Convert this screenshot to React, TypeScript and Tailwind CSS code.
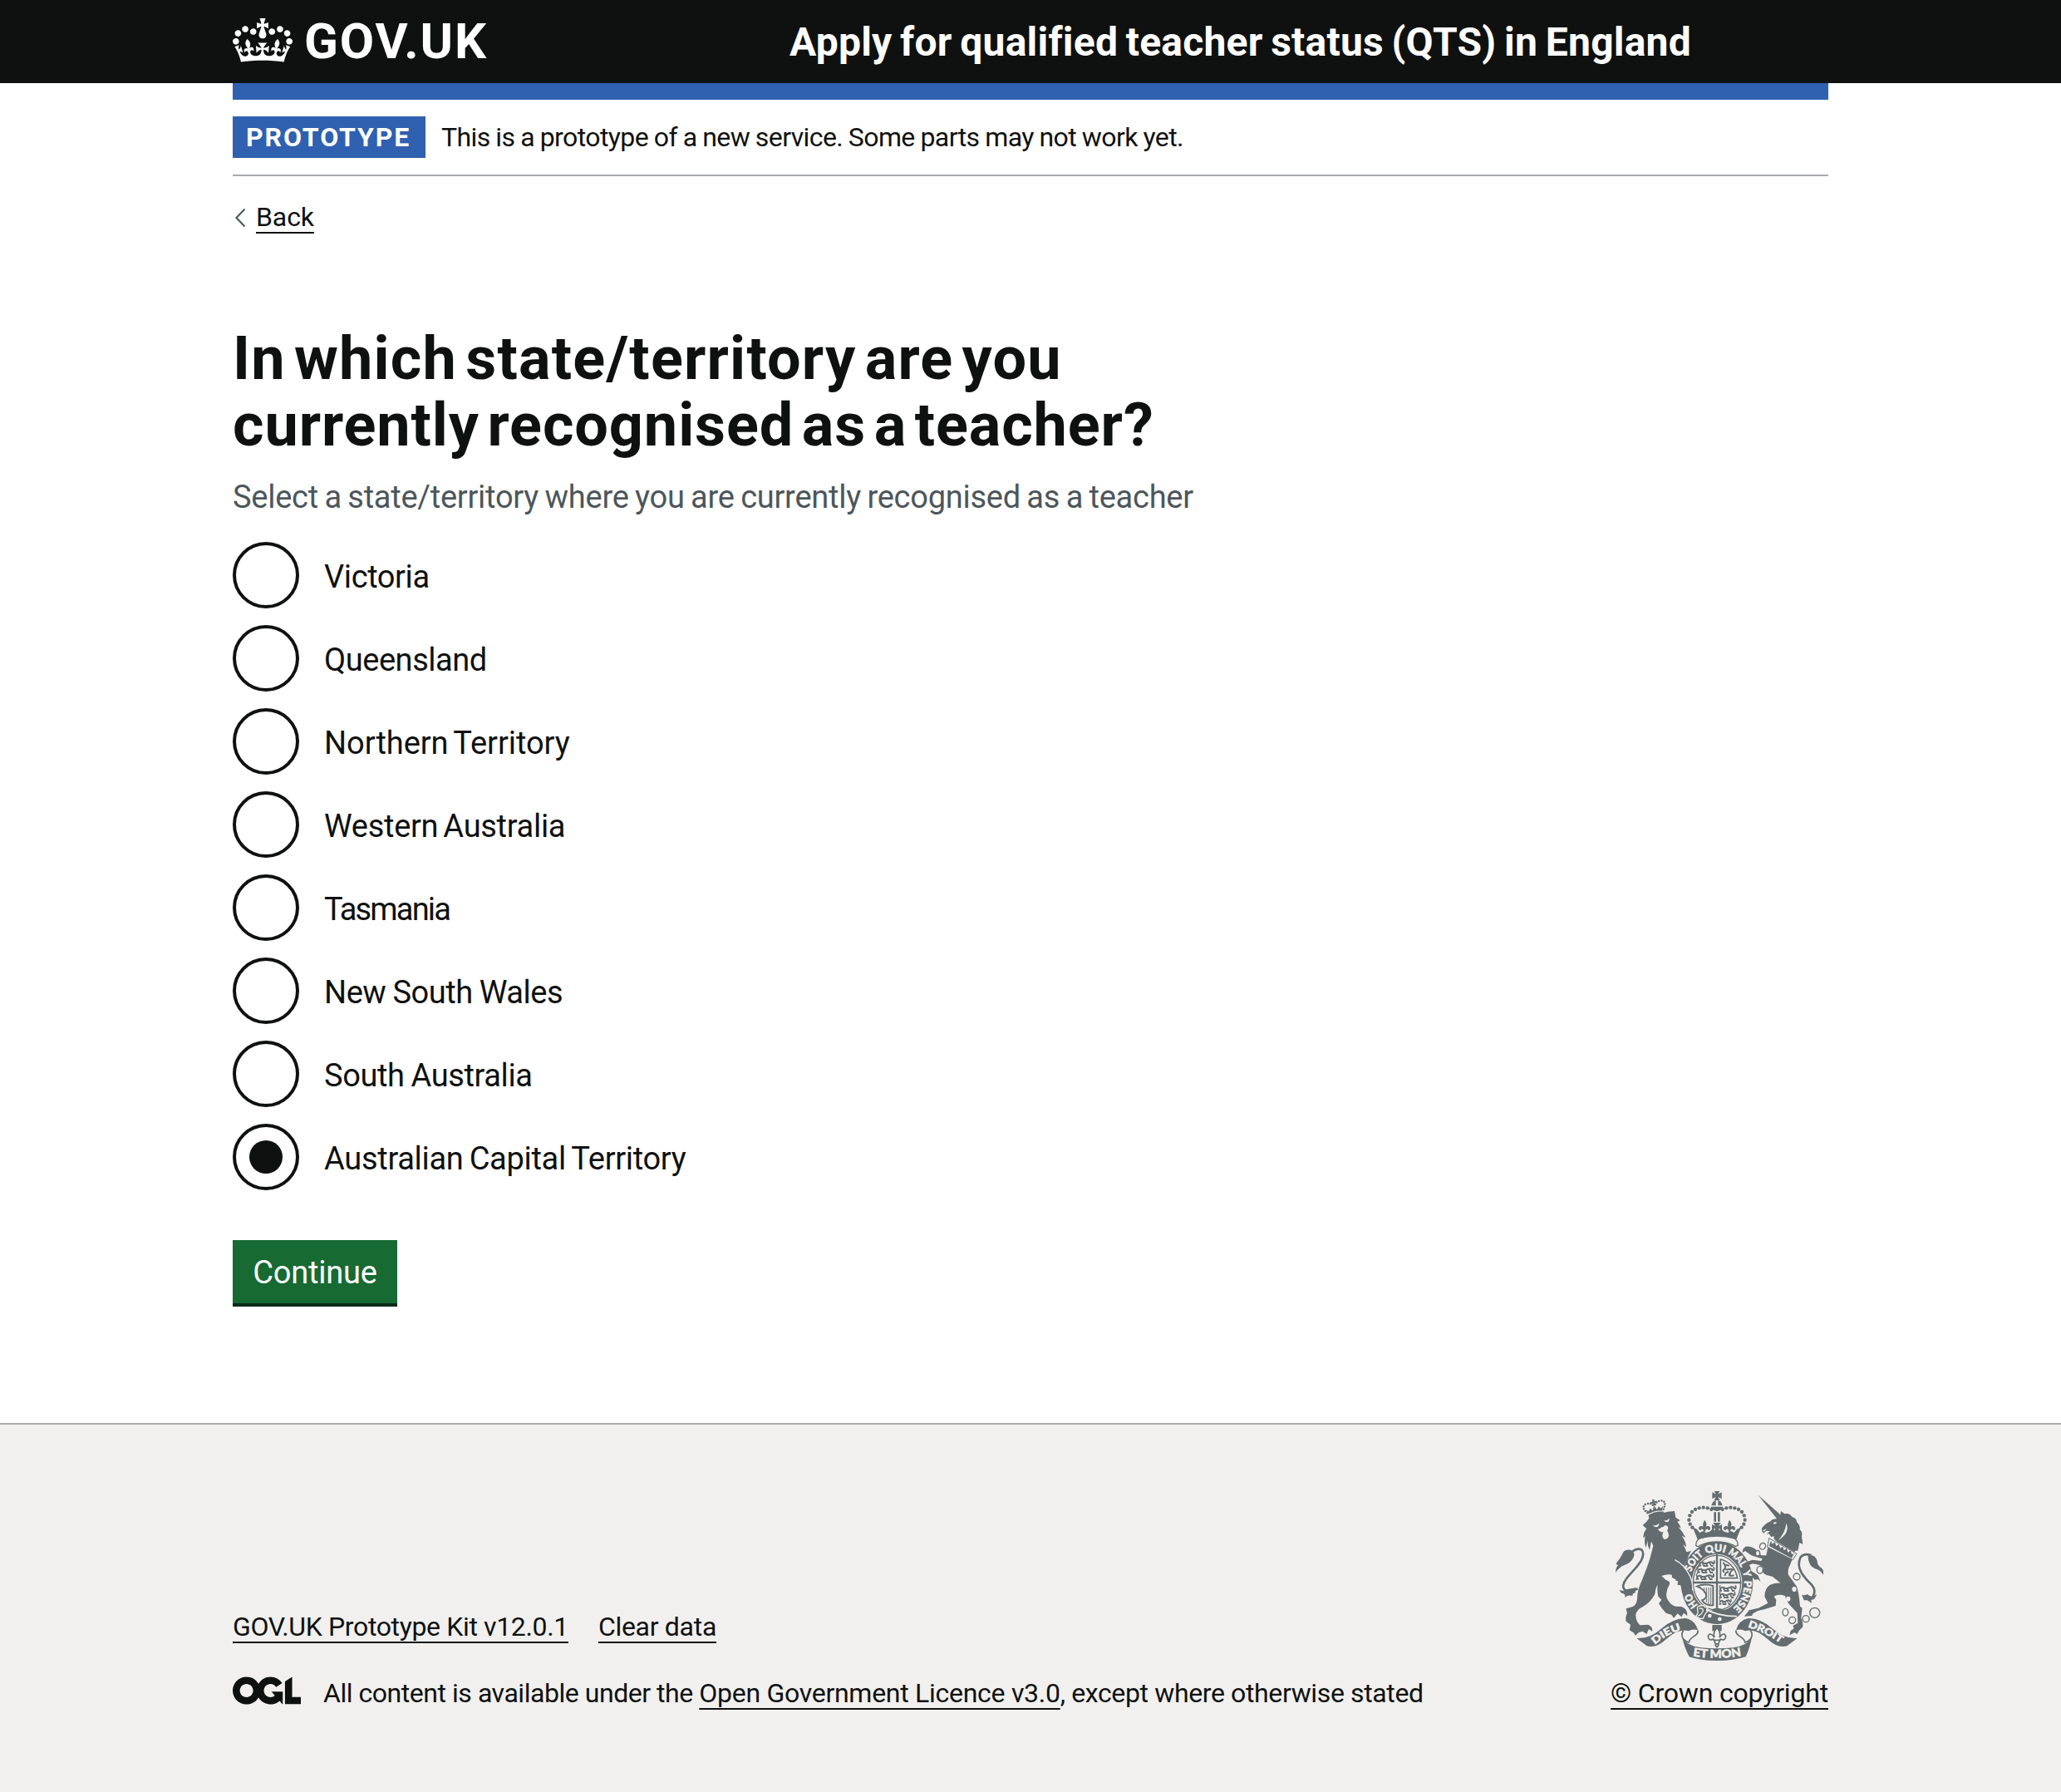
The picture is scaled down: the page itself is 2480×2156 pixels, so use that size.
import type { ReactNode } from "react";

const STATES = [
  { name: "Victoria", tracking: "tracking-[-0.4px]" },
  { name: "Queensland", tracking: "tracking-[-0.45px]" },
  { name: "Northern Territory", tracking: "tracking-[-0.05px] [word-spacing:-3px]" },
  { name: "Western Australia", tracking: "tracking-[-0.3px] [word-spacing:-3px]" },
  { name: "Tasmania", tracking: "tracking-[-1.84px]" },
  { name: "New South Wales", tracking: "tracking-[-0.45px] [word-spacing:-1px]" },
  { name: "South Australia", tracking: "tracking-[-0.4px] [word-spacing:-1px]" },
  { name: "Australian Capital Territory", tracking: "tracking-[-0.3px] [word-spacing:-2px]", selected: true },
];

function Link({ children, className = "" }: { children: ReactNode; className?: string }) {
  return (
    <a
      href="#"
      className={`whitespace-pre underline decoration-2 underline-offset-[7px] [text-decoration-skip-ink:none] ${className}`}
    >
      {children}
    </a>
  );
}

function CrownLogo() {
  return (
    <svg viewBox="0 0 132 97" className="h-[53px] w-[72px] fill-current" aria-hidden="true">
      <path d="M25 30.2c3.5 1.5 7.7-.2 9.1-3.7 1.5-3.6-.2-7.8-3.9-9.2-3.6-1.4-7.6.3-9.1 3.9-1.4 3.5.3 7.5 3.9 9zM9 39.5c3.6 1.5 7.8-.2 9.2-3.7 1.5-3.6-.2-7.8-3.9-9.1-3.6-1.5-7.6.2-9.1 3.8-1.4 3.5.3 7.5 3.8 9zM4.4 57.2c3.5 1.5 7.7-.2 9.1-3.8 1.5-3.6-.2-7.7-3.9-9.1-3.5-1.5-7.6.3-9.1 3.8-1.4 3.5.3 7.6 3.9 9.1zm38.3-21.4c3.5 1.5 7.7-.2 9.1-3.8 1.5-3.6-.2-7.7-3.9-9.1-3.6-1.5-7.6.3-9.1 3.8-1.3 3.6.4 7.7 3.9 9.1zm64.4-5.6c-3.6 1.5-7.8-.2-9.1-3.7-1.5-3.6.2-7.8 3.8-9.2 3.6-1.4 7.7.3 9.2 3.9 1.3 3.5-.4 7.5-3.9 9zm15.9 9.3c-3.6 1.5-7.7-.2-9.1-3.7-1.5-3.6.2-7.8 3.7-9.1 3.6-1.5 7.7.2 9.2 3.8 1.5 3.5-.3 7.5-3.8 9zm4.7 17.7c-3.6 1.5-7.8-.2-9.2-3.8-1.5-3.6.2-7.7 3.9-9.1 3.6-1.5 7.7.3 9.2 3.8 1.3 3.5-.4 7.6-3.9 9.1zM89.3 35.8c-3.6 1.5-7.8-.2-9.2-3.8-1.4-3.6.2-7.7 3.9-9.1 3.6-1.5 7.7.3 9.2 3.8 1.4 3.6-.3 7.7-3.9 9.1zM69.7 17.7l8.9 4.7V9.3l-8.9 2.8c-.2-.3-.5-.6-.9-.9L72.4 0H59.6l3.5 11.2c-.3.3-.6.5-.9.9l-8.8-2.8v13.1l8.8-4.7c.3.3.6.7.9.9l-5 15.4v.1c-.2.8-.4 1.6-.4 2.4 0 4.1 3.1 7.5 7 8.1h.2c.3 0 .7.1 1 .1.4 0 .7 0 1-.1h.2c4-.6 7.1-4.1 7.1-8.1 0-.8-.1-1.7-.4-2.4V34l-5.1-15.4c.4-.2.7-.6 1-.9zM66 92.8c16.9 0 32.8 1.1 47.1 3.2 4-16.9 8.9-26.7 14-33.5l-9.6-3.4c1 4.9 1.1 7.2 0 10.2-1.5-1.4-3-4.3-4.2-8.7L108.6 76c2.8-2 5-3.2 7.5-3.3-4.4 9.4-10 11.9-13.6 11.2-4.3-.8-6.3-4.6-5.6-7.9 1-4.7 5.7-5.9 8-.5 4.3-8.7-3-11.4-7.6-8.8 7.1-7.2 7.9-13.5 2.1-21.1-8 6.1-8.1 12.3-4.5 20.8-4.7-5.4-12.1-2.5-9.5 6.2 3.4-5.2 7.9-2 7.2 3.1-.6 4.3-6.4 7.8-13.5 7.2-10.3-.9-10.9-8-11.2-13.8 2.5-.5 7.1 1.8 11 7.3L80.2 60c-4.1 4.4-8 5.3-12.3 5.4 1.4-4.4 8-11.6 8-11.6H55.5s6.4 7.2 7.9 11.6c-4.2-.1-8-1-12.3-5.4l1.4 16.4c3.9-5.5 8.5-7.7 10.9-7.3-.3 5.8-.9 12.8-11.1 13.8-7.2.6-12.9-2.9-13.5-7.2-.7-5 3.8-8.3 7.1-3.1 2.7-8.7-4.6-11.6-9.4-6.2 3.7-8.5 3.6-14.7-4.6-20.8-5.8 7.6-5 13.9 2.2 21.1-4.7-2.6-11.9.1-7.7 8.8 2.3-5.5 7.1-4.2 8.1.5.7 3.3-1.3 7.1-5.7 7.9-3.5.7-9-1.8-13.5-11.2 2.5.1 4.7 1.3 7.5 3.3l-4.7-15.4c-1.2 4.4-2.7 7.2-4.3 8.7-1.1-3-.9-5.3 0-10.2l-9.5 3.4c5 6.9 9.9 16.7 14 33.5 14.8-2.1 30.8-3.2 47.7-3.2z" />
    </svg>
  );
}

function OglLogo() {
  return (
    <svg viewBox="0 0 483.2 195.7" className="h-[34px] w-[82px] fill-current" aria-hidden="true">
      <path d="M421.5 142.8V.1l-50.7 32.3v161.1h112.4v-50.7zm-122.3-9.6A47.12 47.12 0 0 1 221 97.8c0-26 21.1-47.1 47.1-47.1 16.7 0 31.4 8.7 39.7 21.8l42.7-27.2A97.63 97.63 0 0 0 268.1 0c-36.5 0-68.3 20.1-85.1 49.7A98 98 0 0 0 97.8 0C43.9 0 0 43.9 0 97.8s43.9 97.8 97.8 97.8c36.5 0 68.3-20.1 85.1-49.7a97.76 97.76 0 0 0 149.6 25.4l19.4 22.2h3v-87.8h-80l24.3 27.5zM97.8 145c-26 0-47.1-21.1-47.1-47.1s21.1-47.1 47.1-47.1 47.1 21.1 47.1 47.1S123.8 145 97.8 145" />
    </svg>
  );
}

const INK = "#646c6f";
const PAPER = "#f1f0ee";

const ARCH_DOTS: [number, number][] = [
  [418, 138], [404, 133], [389, 131], [374, 133], [360, 138], [348, 147], [340, 160], [337, 176], [341, 191], [349, 203],
];

const MOTTO: [string, number, number][] = [
  ["HO", 44, 71],
  ["SOIT", 110, 151],
  ["QUI", 157, 197],
  ["MAL", 203, 241],
  ["Y", 249, 260],
  ["PENSE", 266, 324],
];

/* Point on the garter's lettering line, in degrees clockwise from the bottom. */
function garterPoint(deg: number): [number, number] {
  const t = (deg * Math.PI) / 180;
  return [438 - 99 * Math.sin(t), 403 + 113 * Math.cos(t)];
}

function garterArc(from: number, to: number) {
  const pts: [number, number][] = [];
  for (let i = 0; i <= 24; i++) pts.push(garterPoint(from + ((to - from) * i) / 24));
  let length = 0;
  for (let i = 1; i < pts.length; i++) length += Math.hypot(pts[i][0] - pts[i - 1][0], pts[i][1] - pts[i - 1][1]);
  const [a, b] = [pts[0], garterPoint(to + 8)];
  return { d: `M${a[0]} ${a[1]}A99 113 0 0 1 ${b[0]} ${b[1]}`, length };
}

/* One walking lion of the quartered shield. */
function PassantLion({ x, y, w = 1 }: { x: number; y: number; w?: number }) {
  return (
    <g transform={`translate(${x} ${y}) scale(${w} 1)`} fill="none" stroke={INK} strokeWidth="6" strokeLinecap="round">
      <path d="M4 8q8-7 16-3t16 1 14-4 14 6M6 8l-3 7h6M18 8l4 8h5M36 8l-4 8h6M48 7l6 9h6M60 8q10 0 6-10" />
      <path d="M4 5q-5-6 1-8" strokeWidth="4" />
    </g>
  );
}

function Fleur({ x, y }: { x: number; y: number }) {
  return (
    <path
      transform={`translate(${x} ${y})`}
      d="M0-24C9-14 9-6 4 2q8-8 16 0 4 9-6 12-1-7-6-5Q2 10 4 18H-4Q-2 10-8 9-13 7-14 14-24 11-20 2-12-6-4 2-9-6 0-24Z"
    />
  );
}

function RoyalCoatOfArms() {
  return (
    <svg viewBox="72 72 750 612" className="h-[204px] w-[250px]" fill={INK} aria-label="Royal coat of arms">
      {/* Lion */}
      <g transform="translate(48 48)">
        <path d="M122 147 136 134 145 122Q190 98 237 96L241 119 257 130 247 134Q256 145 260 158L250 153Q268 172 277 192L263 185Q278 205 279 226L267 216Q276 230 280 244L298 240Q286 255 282 275L270 293Q298 322 299 352L298 378 288 368 280 378 274 366 262 374 259 364 247 362 250 350 240 346 247 336 236 334V316L226 326Q212 322 190 330L206 345Q224 350 218 362 202 388 210 412 222 436 240 440L262 441Q284 448 283 474L270 464 262 478 248 466 234 482 226 470 206 464Q190 448 180 430L190 416 178 404Q173 380 176 362 168 372 166 396 150 426 122 442 100 452 97 470 96 492 112 508L142 506Q160 514 156 530L144 522 136 540 122 530 108 534 96 545 88 534 74 526 78 506 62 494Q58 474 66 466L62 448 84 442Q100 436 102 414 102 380 120 344 138 300 148 268L160 222 153 205 147 236Q138 222 140 200L134 228Q126 212 131 186L124 194Q124 172 136 160Z" />
        <path
          d="M158 148q12 2 24-8-2 12-10 14-10 0-14-6ZM198 130q12 2 20-8 0 12-8 14-8 0-12-6ZM176 162q10-2 14-8 6 2 12-6 10-2 12 8 0 8-4 10 8 14 5 24-8 12-18 6-8-12 0-26-8 4-14-2Z"
          fill={PAPER}
        />
        <path d="M24 318Q24 300 34 290 24 292 28 282 44 262 50 248 56 234 78 236 96 244 90 260 82 282 58 290 36 298 24 318Z" />
        <path
          d="M84 242Q104 228 118 236 130 248 116 276 102 298 78 322 48 354 52 372 62 396 104 376"
          fill="none"
          stroke={INK}
          strokeWidth="8"
        />
        <path d="M38 380Q56 388 66 378L100 372Q92 382 96 390 82 394 86 402 70 398 58 408 60 398 52 394 42 392 38 380Z" />
        {/* Lion's crown */}
        <g transform="rotate(-13 168 92)">
          <path d="M139 104q28-9 56 0v13q-28-9-56 0ZM141 100 134 84l10 7 6-9 8 10 8-16 8 16 8-10 6 9 10-7-7 16q-26-8-50 0ZM164 53h8l-1 8 8-1v8l-8-1 2 9h-10l2-9-8 1v-8l8 1Z" />
          <g fill="none" stroke={INK} strokeWidth="7.500" strokeLinecap="round" strokeDasharray="0 9.500">
            <path d="M137 96Q118 70 138 64 156 60 165 76" />
            <path d="M197 96Q216 70 196 64 180 60 169 76" />
          </g>
        </g>
      </g>

      {/* Unicorn */}
      <g transform="translate(438 48)">
        <path d="M149 38 232 112 218 126Z" />
        <path d="M162 158Q176 138 192 134 200 124 216 124L228 116 231 96 244 106Q262 102 272 118 288 122 288 136 302 148 299 162 310 172 306 188L310 216 298 210 292 240Q282 236 280 244L218 208Q202 198 206 186L196 190 188 178 178 180 192 168 178 168 168 176 163 170Z" />
        <path d="M204 138q8-4 12 0-4 6-12 4ZM250 140q10 20-4 40-14 16-24 22 18-24 22-36 4-10 6-26ZM166 166l14-6-10 10Z" fill={PAPER} />
        <path d="M184 224 272 270 264 290Q254 306 258 326L288 368Q296 390 300 440L308 446 304 482Q312 500 310 514L296 528 290 540 280 534 262 544 266 528 278 520 274 510 292 500 290 464 262 434Q248 416 246 402 222 394 206 404L214 416 212 438Q176 450 148 456L130 466 126 474 98 476 110 462 116 454 150 446 184 428 172 404Q172 374 192 362 214 354 230 356L200 332 176 326 164 316 168 300 152 290 130 286 112 292 124 312 148 328 158 352 148 342 138 344 128 336Q104 308 106 280L128 272 160 276 164 268 142 262 124 256 102 240 92 246Q92 230 104 224 124 222 142 236L160 256 178 256Z" />
        {/* Coronet collar */}
        <path d="M188 194 288 250 274 272 182 226Z" fill={PAPER} stroke={INK} strokeWidth="3" />
        <path d="M188 222 195 203 200 215 209 208 214 222 224 216 228 230 238 224 242 238 252 230 256 246 266 238 270 252 278 248 270 266Z" />
        {/* Chain */}
        <g fill="none" stroke={INK} strokeWidth="4">
          <ellipse cx="165" cy="223" rx="10" ry="12" transform="rotate(30 165 223)" />
          <ellipse cx="147" cy="248" rx="8" ry="10" fill={PAPER} />
          <ellipse cx="155" cy="308" rx="11" ry="13" fill={PAPER} />
          <circle cx="288" cy="333" r="12" fill={PAPER} />
          <ellipse cx="247" cy="461" rx="10" ry="13" />
          <circle cx="272" cy="490" r="12" />
          <circle cx="321" cy="485" r="12" fill={PAPER} />
          <circle cx="353" cy="463" r="18" />
        </g>
        <ellipse cx="279" cy="378" rx="8" ry="9" fill={PAPER} />
        <ellipse cx="257" cy="413" rx="8" ry="9" fill={PAPER} />
        <path
          d="M340 256Q316 246 302 262 288 290 306 320 320 342 342 362 360 384 346 406 338 418 318 406"
          fill="none"
          stroke={INK}
          strokeWidth="8"
        />
        <path d="M328 256Q354 250 362 276 362 292 378 302 388 310 382 328 378 310 354 304 330 296 328 256ZM306 398Q316 402 326 396 344 412 360 396 354 418 340 416L342 428 326 418 314 418Z" />
      </g>

      {/* Garter and shield */}
      <ellipse cx="438" cy="403" rx="130" ry="149" />
      <ellipse cx="438" cy="403" rx="91" ry="104" fill={PAPER} />
      <ellipse cx="438" cy="403" rx="86" ry="99" fill="none" stroke={INK} strokeWidth="4" />
      <path d="M438 300V500M350 402H526" stroke={INK} strokeWidth="7" />
      <PassantLion x={372} y={326} w={0.85} />
      <PassantLion x={366} y={350} w={0.92} />
      <PassantLion x={362} y={374} w={0.96} />
      <PassantLion x={446} y={416} w={0.9} />
      <PassantLion x={446} y={440} w={0.85} />
      <PassantLion x={446} y={464} w={0.65} />
      <path d="M451 386V318Q500 330 512 386Z" fill="none" stroke={INK} strokeWidth="5" />
      <path
        d="M460 330q10 8 8 18t14 6 4 12 14 10M468 350l-8 8 4 8M480 362l-10 6-4 10M486 368l-2 12M470 338l12 4M490 360l10-8"
        fill="none"
        stroke={INK}
        strokeWidth="6"
      />
      <path d="M366 416Q392 404 424 414V484Q396 486 384 466 404 458 398 442 388 424 366 416Z" fill="none" stroke={INK} strokeWidth="6" />
      <path d="M392 420v20M400 420v54M408 420v60M416 420v60" stroke={INK} strokeWidth="3" />
      <path d="M416 500Q438 488 462 500L480 498Q460 516 438 516Z" />
      {/* Belt end and buckle */}
      <path d="M390 494Q440 524 510 524" fill="none" stroke={PAPER} strokeWidth="5" />
      <path
        d="M368 500Q364 486 380 486 390 482 394 490L406 492Q396 500 404 506 394 514 388 532 372 534 362 522 372 516 368 500Z"
        stroke={PAPER}
        strokeWidth="4"
      />
      <path d="M374 496Q388 492 388 504 380 520 370 522" fill="none" stroke={PAPER} strokeWidth="4" />
      <circle cx="412" cy="522" r="7" fill={PAPER} />
      <circle cx="448" cy="534" r="7" fill={PAPER} />
      <g fill={PAPER} stroke={PAPER} strokeWidth="1.500" fontFamily="Lato, sans-serif" fontWeight="900" fontSize="37">
        {MOTTO.map(([word, from, to]) => {
          const arc = garterArc(from, to);
          return (
            <g key={word}>
              <path id={`motto-${word}`} d={arc.d} fill="none" stroke="none" />
              <text>
                <textPath href={`#motto-${word}`} textLength={arc.length} lengthAdjust="spacingAndGlyphs">
                  {word}
                </textPath>
              </text>
            </g>
          );
        })}
      </g>

      {/* Lion's forepaw over the garter */}
      <path d="M270 310 288 324Q322 342 340 382 350 404 348 428L338 416 330 430 322 414 310 426 306 400 276 384Z" />
      <path d="M286 320Q322 338 342 382 352 404 350 430" fill="none" stroke={PAPER} strokeWidth="4" />

      {/* Imperial crown */}
      <path
        d="M362 268Q362 244 384 240 438 226 492 240 514 244 514 268 500 274 500 268 438 242 376 268 370 276 362 268Z"
        fill={PAPER}
        stroke={INK}
        strokeWidth="4"
      />
      <path d="M350 202 366 210 376 222 388 216 398 222 412 218 424 206 430 216 438 212 446 216 452 206 464 218 478 222 488 216 500 222 510 210 526 202 508 246Q438 226 368 246Z" />
      <Fleur x={393} y={200} />
      <Fleur x={483} y={200} />
      <path d="M424 186h28l-8 12 12-6v20l-12-6 4 14h-20l4-14-12 6v-20l12 6ZM427 148h8v34h-8ZM441 148h8v34h-8ZM416 128h44q-4 14-22 16-18-2-22-16ZM418 124q4-16 16-20v20ZM442 104q12 4 16 20h-16Z" />
      <path d="M428 72h20l-6 11 13-7v24l-13-7 6 12h-20l6-12-13 7V76l13 7Z" />
      {ARCH_DOTS.map(([x, y]) => (
        <g key={x}>
          <circle cx={x} cy={y} r="6.500" />
          <circle cx={876 - x} cy={y} r="6.500" />
        </g>
      ))}

      {/* Ribbon */}
      <g id="ribbon-half">
        <path d="M148 603Q195 606 235 570 280 530 325 531 360 538 369 574 350 568 336 577 300 566 255 606 220 640 185 631Z" />
        <path d="M369 574C374 596 338 596 337 618 314 612 304 590 318 574" fill="none" stroke={INK} strokeWidth="5" />
      </g>
      <use href="#ribbon-half" transform="matrix(-1 0 0 1 876 0)" />
      <path d="M312 600Q332 632 380 637 438 643 496 637 544 632 564 600 556 640 542 670 500 684 438 684 376 684 338 670 322 640 312 600Z" />
      <path id="dieu-arc" d="M214 627Q262 583 330 567" fill="none" />
      <path id="mon-arc" d="M345 666Q438 683 531 666" fill="none" />
      <path id="droit-arc" d="M549 563Q612 582 668 622" fill="none" />
      <g fill={PAPER} stroke={PAPER} strokeWidth="1.500" fontFamily="Lato, sans-serif" fontWeight="900">
        <text fontSize="37">
          <textPath href="#dieu-arc" textLength="110" lengthAdjust="spacingAndGlyphs">
            DIEU
          </textPath>
        </text>
        <text fontSize="42">
          <textPath href="#mon-arc" startOffset="6" textLength="176" lengthAdjust="spacingAndGlyphs">
            ET MON
          </textPath>
        </text>
        <text fontSize="36">
          <textPath href="#droit-arc" textLength="132" lengthAdjust="spacingAndGlyphs">
            DROIT
          </textPath>
        </text>
      </g>

      {/* Fleur-de-lis badge */}
      <path d="M421 555h34v22h-34Z" />
      <g fill={PAPER} stroke={INK} strokeWidth="5">
        <path d="M438 566Q454 582 447 600 464 578 470 596 468 612 456 608 452 604 448 610L444 622 438 634 432 622 428 610Q424 604 420 608 408 612 406 596 412 578 429 600 422 582 438 566Z" />
        <path d="M424 610H452" />
        <circle cx="438" cy="628" r="5" />
      </g>
    </svg>
  );
}

export default function App() {
  return (
    <div className="flex min-h-[2156px] flex-col bg-white font-[Roboto,sans-serif] text-[#0f1110]">
      <header className="h-[100px] bg-[#0f1110] text-white">
        <div className="mx-auto flex h-full w-[1920px] items-center">
          <div className="flex w-[670px] items-center gap-[14px]">
            <div className="pb-[4px]">
              <CrownLogo />
            </div>
            <span className="text-[60px] leading-none font-bold tracking-[1.9px]">GOV.UK</span>
          </div>
          <span className="pt-px text-[48px] leading-none font-bold tracking-[0.22px] [word-spacing:-2.5px] whitespace-nowrap">
            Apply for qualified teacher status (QTS) in England
          </span>
        </div>
      </header>

      <div className="mx-auto w-[1920px] flex-1">
        <div className="h-5 bg-[#3060b0]" />
        <div className="flex items-center gap-[19px] border-b-2 border-[#a8abad] py-5 text-[32px] leading-[50px]">
          <strong className="w-[232px] bg-[#3060b0] pl-4 font-bold tracking-[1.9px] text-white">PROTOTYPE</strong>
          <span className="tracking-[-0.6px] [word-spacing:-0.6px] whitespace-nowrap">
            This is a prototype of a new service. Some parts may not work yet.
          </span>
        </div>
        <div className="mt-[29px] flex h-10 items-center text-[32px] leading-10">
          <svg viewBox="0 0 28 24" className="h-6 w-7" fill="none" stroke="#505a5f" strokeWidth="2.200" aria-hidden="true">
            <path d="M14.500 2.500 4.500 13l10 10.500" />
          </svg>
          <Link className="tracking-[-0.1px]">Back</Link>
        </div>

        <main className="pt-[111px]">
          <h1 className="text-[72px] leading-[80px] font-bold">
            <span className="block tracking-[1.2px] [word-spacing:-8.9px]">In which state/territory are you</span>
            <span className="block tracking-[0.9px] [word-spacing:-9.2px]">currently recognised as a teacher?</span>
          </h1>
          <p className="mt-[21px] text-[38px] leading-[50px] tracking-[-0.25px] text-[#4d565b] [word-spacing:-1.7px]">
            Select a state/territory where you are currently recognised as a teacher
          </p>
          <div className="mt-[29px] flex flex-col gap-5">
            {STATES.map((s) => (
              <label key={s.name} className="flex h-20 items-center gap-[30px] text-[38px] leading-[50px]">
                <span className="flex size-20 items-center justify-center rounded-full border-4 border-[#0f1110]">
                  {s.selected && <span className="size-10 rounded-full bg-[#0f1110]" />}
                </span>
                <span className={`pt-[3px] ${s.tracking}`}>{s.name}</span>
              </label>
            ))}
          </div>
          <button className="mt-[60px] h-[76px] w-[198px] bg-[#166a32] pt-[3px] text-[38px] tracking-[-0.2px] text-white shadow-[0_4px_0_#0b2b19]">
            Continue
          </button>
        </main>
      </div>

      <footer className="h-[444px] border-t-2 border-[#a8abad] bg-[#f1f0ee] pt-20 text-[32px] leading-10">
        <div className="mx-auto flex w-[1920px] items-end justify-between">
          <div className="flex flex-col gap-10">
            <div className="flex gap-9">
              <Link className="tracking-[-0.36px]">GOV.UK Prototype Kit v12.0.1</Link>
              <Link className="tracking-[-0.3px]">Clear data</Link>
            </div>
            <div className="flex">
              <OglLogo />
              <p className="ml-[27px] whitespace-pre">
                <span className="tracking-[-0.46px]">All content is available under the </span>
                <Link className="tracking-[-0.28px]">Open Government Licence v3.0</Link>
                <span className="tracking-[-0.37px]">, except where otherwise stated</span>
              </p>
            </div>
          </div>
          <div className="flex flex-col items-end gap-[19px]">
            <div className="pr-[6px]">
              <RoyalCoatOfArms />
            </div>
            <Link className="tracking-[-0.18px]">© Crown copyright</Link>
          </div>
        </div>
      </footer>
    </div>
  );
}
